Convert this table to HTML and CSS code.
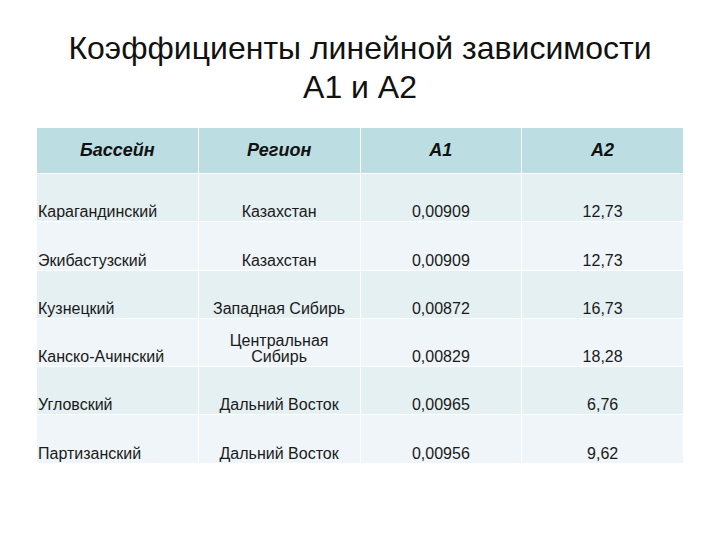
FILE: index.html
```html
<!DOCTYPE html>
<html lang="ru">
<head>
<meta charset="utf-8">
<title>Коэффициенты линейной зависимости</title>
<link rel="stylesheet" href="styles.css">
</head>
<body>
<div class="slide">
  <h1 class="title">Коэффициенты линейной зависимости<br>A1 и A2</h1>
  <table class="coef">
    <thead>
      <tr>
        <th>Бассейн</th>
        <th>Регион</th>
        <th>A1</th>
        <th>A2</th>
      </tr>
    </thead>
    <tbody>
      <tr class="odd">
        <td class="name">Карагандинский</td>
        <td>Казахстан</td>
        <td>0,00909</td>
        <td>12,73</td>
      </tr>
      <tr class="even">
        <td class="name">Экибастузский</td>
        <td>Казахстан</td>
        <td>0,00909</td>
        <td>12,73</td>
      </tr>
      <tr class="odd">
        <td class="name">Кузнецкий</td>
        <td>Западная Сибирь</td>
        <td>0,00872</td>
        <td>16,73</td>
      </tr>
      <tr class="even">
        <td class="name">Канско-Ачинский</td>
        <td>Центральная<br>Сибирь</td>
        <td>0,00829</td>
        <td>18,28</td>
      </tr>
      <tr class="odd">
        <td class="name">Угловский</td>
        <td>Дальний Восток</td>
        <td>0,00965</td>
        <td>6,76</td>
      </tr>
      <tr class="even">
        <td class="name">Партизанский</td>
        <td>Дальний Восток</td>
        <td>0,00956</td>
        <td>9,62</td>
      </tr>
    </tbody>
  </table>
</div>
</body>
</html>
```
FILE: styles.css
```css
html, body {
  margin: 0;
  padding: 0;
  background: #ffffff;
}

body {
  font-family: "Liberation Sans", Arial, sans-serif;
  color: #111;
}

.slide {
  width: 720px;
  height: 540px;
  padding: 29px 0 0 36px;
  box-sizing: border-box;
}

.title {
  margin: 0 0 20px -36px;
  width: 720px;
  text-align: center;
  font-weight: normal;
  font-size: 32px;
  line-height: 39px;
  color: #111;
}

.coef {
  width: 648px;
  border-collapse: collapse;
  table-layout: fixed;
  font-size: 16px;
}

.coef th,
.coef td {
  border: 1px solid #ffffff;
  width: 25%;
  text-align: center;
}

.coef th {
  height: 45px;
  padding: 0;
  background: #bcdde2;
  font-size: 18px;
  font-weight: bold;
  font-style: italic;
  color: #111;
  vertical-align: middle;
}

.coef td {
  height: 46.3px;
  padding: 0 0 1px;
  vertical-align: bottom;
  line-height: 16px;
  color: #1a1a1a;
}

.coef tr.odd td {
  background: #e5f0f2;
}

.coef tr.even td {
  background: #eff5f8;
}

.coef td.name {
  text-align: left;
  padding-left: 1px;
}
```
